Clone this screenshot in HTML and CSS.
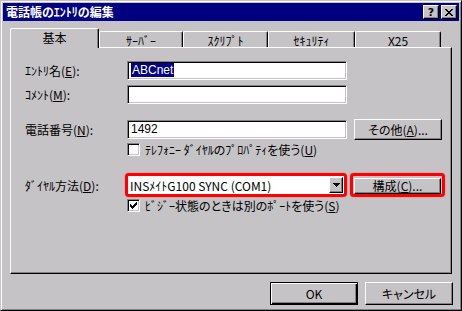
FILE: index.html
```html
<!DOCTYPE html>
<html lang="ja">
<head>
    <meta charset="UTF-8">
    <title>電話帳のｴﾝﾄﾘの編集</title>
    <link rel="stylesheet" href="styles.css">
</head>
<body>
    <div class="window">
        <!-- Title bar -->
        <div class="titlebar">
            <span class="title">電話帳のｴﾝﾄﾘの編集</span>
            <div class="title-btns">
                <span class="tbtn help">?</span>
                <span class="tbtn close">
                    <svg width="8" height="7" viewBox="0 0 8 7" shape-rendering="crispEdges">
                        <path d="M0 0h2v1h-2zM6 0h2v1h-2zM1 1h2v1h-2zM5 1h2v1h-2zM2 2h4v1h-4zM3 3h2v1h-2zM2 4h4v1h-4zM1 5h2v1h-2zM5 5h2v1h-2zM0 6h2v1h-2zM6 6h2v1h-2z" fill="#000"/>
                    </svg>
                </span>
            </div>
        </div>

        <div class="body">
            <!-- Tabs -->
            <div class="tabs">
                <div class="tab active">基本</div>
                <div class="tab">ｻｰﾊﾞｰ</div>
                <div class="tab">ｽｸﾘﾌﾟﾄ</div>
                <div class="tab">ｾｷｭﾘﾃｨ</div>
                <div class="tab">X25</div>
            </div>

            <!-- Tab page -->
            <div class="panel">
                <div class="row">
                    <span class="lbl">ｴﾝﾄﾘ名(<u>E</u>):</span>
                    <div class="field"><span class="selected">ABCnet</span></div>
                </div>
                <div class="row row-comment">
                    <span class="lbl">ｺﾒﾝﾄ(<u>M</u>):</span>
                    <div class="field"></div>
                </div>
                <div class="row row-phone">
                    <span class="lbl">電話番号(<u>N</u>):</span>
                    <div class="field">1492</div>
                    <button class="btn btn-other">その他(<u>A</u>)...</button>
                </div>
                <div class="check-row row-telephony">
                    <span class="checkbox"></span>
                    <span>ﾃﾚﾌｫﾆｰ ﾀﾞｲﾔﾙのﾌﾟﾛﾊﾟﾃｨを使う(<u>U</u>)</span>
                </div>
                <div class="row row-dial">
                    <span class="lbl">ﾀﾞｲﾔﾙ方法(<u>D</u>):</span>
                    <div class="ring ring-select">
                        <div class="select">
                            <span class="select-text">INSﾒｲﾄG100 SYNC (COM1)</span>
                            <span class="drop">
                                <svg width="7" height="4" viewBox="0 0 7 4" shape-rendering="crispEdges">
                                    <path d="M0 0h7v1h-7zM1 1h5v1h-5zM2 2h3v1h-3zM3 3h1v1h-1z" fill="#000"/>
                                </svg>
                            </span>
                        </div>
                    </div>
                    <div class="ring ring-btn">
                        <button class="btn btn-config">構成(<u>C</u>)...</button>
                    </div>
                </div>
                <div class="check-row row-busy">
                    <span class="checkbox">
                        <svg width="7" height="7" viewBox="0 0 7 7" shape-rendering="crispEdges">
                            <path d="M6 0h1v3h-1zM5 1h1v3h-1zM4 2h1v3h-1zM3 3h1v3h-1zM2 4h1v3h-1zM1 3h1v3h-1zM0 2h1v3h-1z" fill="#000"/>
                        </svg>
                    </span>
                    <span>ﾋﾞｼﾞｰ状態のときは別のﾎﾟｰﾄを使う(<u>S</u>)</span>
                </div>
            </div>

            <!-- Dialog buttons -->
            <div class="footer">
                <button class="btn btn-default">OK</button>
                <button class="btn">キャンセル</button>
            </div>
        </div>
    </div>
</body>
</html>
```

FILE: styles.css
```css
* {
    box-sizing: border-box;
}
body {
    margin: 0;
    background: #c6c3c6;
    font-family: "Noto Sans CJK JP", "Noto Sans", sans-serif;
    font-size: 12px;
    font-feature-settings: "palt";
    color: #000;
}
u {
    text-decoration: underline;
    text-underline-offset: 1px;
}
.window {
    width: 462px;
    height: 311px;
    padding: 2px;
    background: #c6c3c6;
    border: 1px solid;
    border-color: #c6c3c6 #000 #000 #c6c3c6;
    box-shadow: inset 1px 1px #fff, inset -1px -1px #848284;
}

/* title bar */
.titlebar {
    height: 18px;
    display: flex;
    align-items: center;
    justify-content: space-between;
    padding: 0 2px 0 3px;
    background: #000080;
    color: #fff;
}
.title {
    font-weight: bold;
    line-height: 18px;
}
.title-btns {
    display: flex;
    gap: 2px;
}
.tbtn {
    width: 16px;
    height: 14px;
    display: flex;
    align-items: center;
    justify-content: center;
    background: #c6c3c6;
    color: #000;
    border: 1px solid;
    border-color: #fff #000 #000 #fff;
    box-shadow: inset -1px -1px #848284;
    font-family: "DejaVu Sans", sans-serif;
    font-weight: bold;
    font-size: 11px;
    line-height: 1;
}

.body {
    padding: 7px 7px 0;
}

/* tabs */
.tabs {
    display: flex;
    align-items: flex-end;
    height: 19px;
}
.tab {
    height: 16px;
    width: 85px;
    display: flex;
    align-items: center;
    justify-content: center;
    border-left: 1px solid #fff;
    border-top: 1px solid #fff;
    border-right: 1px solid #000;
    border-radius: 2px 2px 0 0;
    box-shadow: inset -1px 0 #848284;
    padding-top: 1px;
}
.tab:nth-child(2) { width: 84px; }
.tab:nth-child(4) { width: 87px; }
.tab:nth-child(5) { width: 86px; }
.tab.active {
    width: 89px;
    height: 20px;
    margin-bottom: -1px;
    position: relative;
    z-index: 1;
    background: #c6c3c6;
    padding-bottom: 3px;
}

/* tab page */
.panel {
    width: 442px;
    height: 227px;
    border: 1px solid;
    border-color: #fff #000 #000 #fff;
    box-shadow: inset -1px -1px #848284;
    padding: 13px 0 0 14px;
}
.row {
    display: flex;
    align-items: center;
    height: 19px;
}
.row-comment { margin-top: 5px; }
.row-phone { margin-top: 15px; height: 21px; }
.row-telephony { margin-top: 3px; }
.row-dial { margin-top: 17px; height: 24px; }
.row-busy { margin-top: 2px; }
.lbl {
    width: 102px;
    flex: none;
    white-space: nowrap;
}
.field {
    width: 220px;
    height: 19px;
    background: #fff;
    border: 1px solid;
    border-color: #848284 #fff #fff #848284;
    box-shadow: inset 1px 1px #000, inset -1px -1px #c6c3c6;
    padding: 0 0 0 3px;
    line-height: 17px;
    font-family: "Liberation Sans", "Noto Sans CJK JP", sans-serif;
    font-size: 12px;
}
.selected {
    background: #000080;
    color: #fff;
    padding: 0 1px;
}

/* buttons */
.btn {
    height: 23px;
    width: 88px;
    padding: 0;
    margin: 0;
    background: #c6c3c6;
    border: 1px solid;
    border-color: #fff #000 #000 #fff;
    box-shadow: inset -1px -1px #848284;
    font: inherit;
    color: #000;
}
.btn-default {
    border-color: #000;
    box-shadow: inset 1px 1px #fff, inset -1px -1px #000, inset -2px -2px #848284;
}
.btn-other {
    height: 21px;
    margin-left: 7px;
}

/* checkboxes */
.check-row {
    display: flex;
    align-items: center;
    gap: 5px;
    height: 13px;
    padding-left: 102px;
    white-space: nowrap;
}
.checkbox {
    width: 13px;
    height: 13px;
    flex: none;
    display: flex;
    align-items: center;
    justify-content: center;
    background: #fff;
    border: 1px solid;
    border-color: #848284 #fff #fff #848284;
    box-shadow: inset 1px 1px #000, inset -1px -1px #c6c3c6;
}

/* red highlight rings */
.ring {
    height: 24px;
    border: 3px solid #f00;
    border-radius: 4px;
    box-shadow: 0 0 1px #b00;
}
.ring-select {
    width: 222px;
    margin-left: -2px;
}
.ring-btn {
    width: 95px;
    margin-left: 3px;
    padding: 1px;
}
.select {
    height: 100%;
    display: flex;
    align-items: center;
    justify-content: space-between;
    background: #fff;
    padding: 0 1px 0 2px;
}
.select-text {
    white-space: nowrap;
}
.drop {
    width: 14px;
    height: 16px;
    display: flex;
    align-items: center;
    justify-content: center;
    background: #c6c3c6;
    border: 1px solid;
    border-color: #fff #000 #000 #fff;
    box-shadow: inset -1px -1px #848284;
}
.btn-config {
    width: 87px;
    height: 16px;
    line-height: 14px;
}

/* footer */
.footer {
    display: flex;
    justify-content: flex-end;
    gap: 7px;
    margin-top: 8px;
    margin-right: -1px;
}
```
